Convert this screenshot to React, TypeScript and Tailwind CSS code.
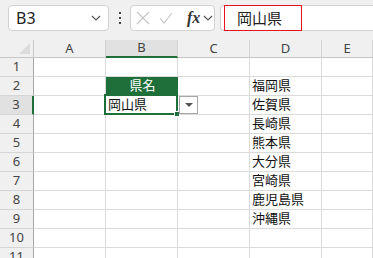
import React from 'react';

const rows = [1, 2, 3, 4, 5, 6, 7, 8, 9, 10, 11];
const cols = ['A', 'B', 'C', 'D', 'E'];

const prefs: Record<number, string> = {
  2: '福岡県',
  3: '佐賀県',
  4: '長崎県',
  5: '熊本県',
  6: '大分県',
  7: '宮崎県',
  8: '鹿児島県',
  9: '沖縄県',
};

const Chevron = ({ className = '' }: { className?: string }) => (
  <svg width="10" height="6" viewBox="0 0 10 6" className={className}>
    <path d="M1 1l4 4 4-4" fill="none" stroke="#555" strokeWidth="1.2" />
  </svg>
);

const FormulaBar = () => (
  <div className="h-[40px] flex items-start pt-[5px] pl-[8px]">
    {/* name box */}
    <div className="w-[101px] h-[26px] bg-white border border-[#d1d1d1] rounded-[4px] flex items-center justify-between pl-[7px] pr-[7px]">
      <span className="text-[16px] text-[#222] leading-none">B3</span>
      <Chevron />
    </div>
    {/* splitter dots */}
    <div className="w-[21px] h-[26px] flex flex-col items-center justify-center gap-[3px]">
      <span className="w-[2px] h-[2px] bg-[#444]" />
      <span className="w-[2px] h-[2px] bg-[#444]" />
      <span className="w-[2px] h-[2px] bg-[#444]" />
    </div>
    {/* cancel / enter / fx */}
    <div className="w-[85px] h-[26px] bg-white border border-[#d1d1d1] rounded-[4px] flex items-center pl-[5px]">
      <svg width="14" height="14" viewBox="0 0 14 14">
        <path d="M1 1l12 12M13 1L1 13" stroke="#c4c4c4" strokeWidth="1.1" fill="none" />
      </svg>
      <svg width="14" height="12" viewBox="0 0 14 12" className="ml-[9px]">
        <path d="M1 6l4 5 8-10" stroke="#c4c4c4" strokeWidth="1.1" fill="none" />
      </svg>
      <span className="ml-[14px] text-[16px] italic font-bold text-[#333] leading-none" style={{ fontFamily: '"Liberation Serif", serif' }}>
        fx
      </span>
      <Chevron className="ml-[3px]" />
    </div>
    {/* formula input */}
    <div className="relative ml-[5px] flex-1 h-[26px] bg-white border border-[#d1d1d1] border-r-0 rounded-l-[4px]">
      <div className="absolute left-[3px] top-[-1px] w-[78px] h-[26px] border border-[#e81123] flex items-center pl-[12px]">
        <span className="text-[15px] text-[#222] leading-none">岡山県</span>
      </div>
    </div>
  </div>
);

export default function App() {
  return (
    <div
      className="w-[373px] h-[258px] overflow-hidden bg-[#f0f0f0] relative"
      style={{ fontFamily: '"Noto Sans", "Noto Sans CJK JP", sans-serif' }}
    >
      <FormulaBar />
      <div className="relative grid grid-cols-[34px_72px_72px_72px_72px_1fr] grid-rows-[18px_repeat(11,19px)] bg-white">
        {/* header row */}
        <div className="relative bg-[#f0f0f0] border-r border-b border-[#c6c6c6]">
          <div className="absolute right-[3px] bottom-[3px] w-0 h-0 border-l-[11px] border-l-transparent border-b-[11px] border-b-[#dcdcdc]" />
        </div>
        {cols.map((c) => (
          <div
            key={c}
            className={`flex items-center justify-center text-[13px] text-[#444] border-r border-[#d4d4d4] ${
              c === 'B' ? 'bg-[#e1e1e1] border-b-2 border-b-[#1f6f3b]' : 'bg-[#f0f0f0] border-b border-b-[#c6c6c6]'
            }`}
          >
            {c}
          </div>
        ))}
        {rows.map((r) => (
          <React.Fragment key={r}>
            <div
              className={`flex items-center justify-center text-[13px] text-[#444] border-b border-[#d4d4d4] ${
                r === 3 ? 'bg-[#e1e1e1] border-r-2 border-r-[#1f6f3b]' : 'bg-[#f0f0f0] border-r border-r-[#a8a8a8]'
              }`}
            >
              {r}
            </div>
            {cols.map((c) => {
              const green = c === 'B' && r === 2;
              let text = '';
              if (c === 'B' && r === 2) text = '県名';
              if (c === 'B' && r === 3) text = '岡山県';
              if (c === 'D' && prefs[r]) text = prefs[r];
              return (
                <div
                  key={c}
                  className={`flex items-end pb-[1px] pl-[2px] text-[13px] leading-[17px] border-r border-b border-[#dadada] ${
                    green ? 'bg-[#1f6f3b] text-white justify-center border-r-[#1f6f3b]' : 'text-[#111]'
                  }`}
                >
                  {text}
                </div>
              );
            })}
          </React.Fragment>
        ))}
        {/* active cell B3 outline */}
        <div className="absolute left-[104px] top-[54px] w-[74px] h-[21px] border-2 border-[#1f6f3b] pointer-events-none" />
        <div className="absolute left-[174px] top-[71px] w-[6px] h-[6px] bg-[#1f6f3b] border border-white" />
        {/* data validation dropdown */}
        <div className="absolute left-[179px] top-[56px] w-[19px] h-[18px] bg-white border border-[#a6a6a6] flex items-center justify-center">
          <div className="w-0 h-0 border-l-[4px] border-r-[4px] border-t-[4px] border-l-transparent border-r-transparent border-t-[#555]" />
        </div>
      </div>
    </div>
  );
}
